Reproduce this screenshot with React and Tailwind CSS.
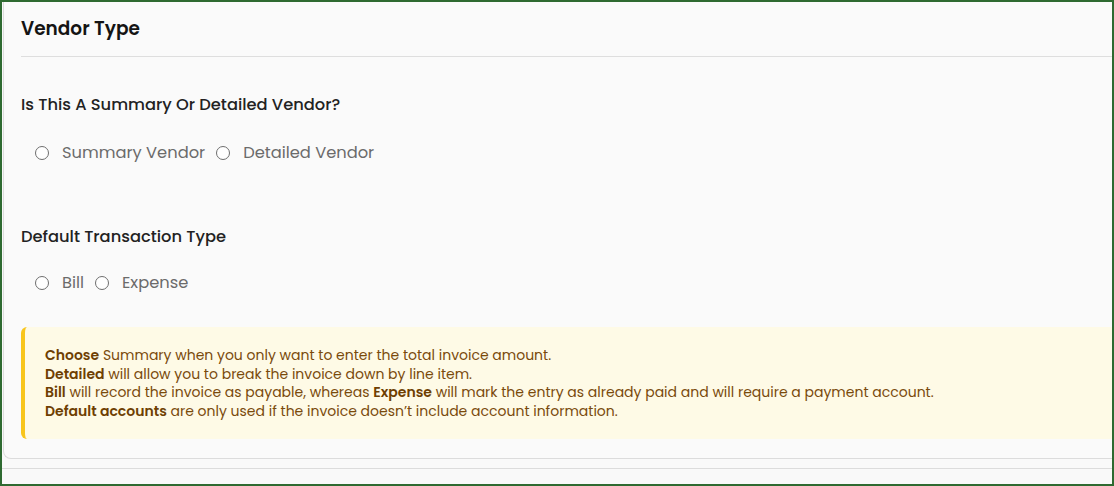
import { useState } from "react";

const font = { fontFamily: "Poppins, Inter, 'Noto Sans', sans-serif" };

function Radio({ label, checked, onClick }) {
  return (
    <label onClick={onClick} className="flex items-center cursor-pointer">
      <span className="flex h-[14px] w-[14px] items-center justify-center rounded-full border-[1.5px] border-[#6e6e6e] bg-white">
        {checked && <span className="h-[6px] w-[6px] rounded-full bg-[#555]" />}
      </span>
      <span className="ml-[13px] mr-[11px] text-[16.3px] leading-[22px] text-[#6b6b6b]">{label}</span>
    </label>
  );
}

export default function App() {
  const [vendorKind, setVendorKind] = useState("");
  const [txType, setTxType] = useState("");

  return (
    <div
      style={font}
      className="h-[486px] w-[1114px] overflow-hidden border-2 border-[#2e6a31] bg-[#f9f9f9]"
    >
      {/* card */}
      <div className="ml-px w-[1140px] rounded-bl-lg border-b border-l border-[#dcdcdc] bg-[#fafafa] px-[17px] pb-[19px]">
        <div className="flex h-[55px] items-center border-b border-[#dedede]">
          <h2 className="text-[18.5px] font-semibold text-[#141414]">Vendor Type</h2>
        </div>

        <p className="mt-[37px] text-[16.3px] font-medium leading-[22px] text-[#222]">
          Is This A Summary Or Detailed Vendor?
        </p>
        <div className="ml-[14px] mt-[26px] flex">
          <Radio label="Summary Vendor" checked={vendorKind === "summary"} onClick={() => setVendorKind("summary")} />
          <Radio label="Detailed Vendor" checked={vendorKind === "detailed"} onClick={() => setVendorKind("detailed")} />
        </div>

        <p className="mt-[62px] text-[16.3px] font-medium leading-[22px] text-[#222]">
          Default Transaction Type
        </p>
        <div className="ml-[14px] mt-[24px] flex">
          <Radio label="Bill" checked={txType === "bill"} onClick={() => setTxType("bill")} />
          <Radio label="Expense" checked={txType === "expense"} onClick={() => setTxType("expense")} />
        </div>

        <div className="mt-[33px] w-[1110px] rounded-l-md border-l-4 border-[#f8c51c] bg-[#fefae6] pb-[19px] pl-[20px] pt-[19px] text-[14px] leading-[18.5px] text-[#7a4a0c]">
          <p>
            <b className="font-semibold text-[#6e3f02]">Choose</b> Summary when you only want to enter the total invoice amount.
          </p>
          <p>
            <b className="font-semibold text-[#6e3f02]">Detailed</b> will allow you to break the invoice down by line item.
          </p>
          <p>
            <b className="font-semibold text-[#6e3f02]">Bill</b> will record the invoice as payable, whereas{" "}
            <b className="font-semibold text-[#6e3f02]">Expense</b> will mark the entry as already paid and will require a payment account.
          </p>
          <p>
            <b className="font-semibold text-[#6e3f02]">Default accounts</b> are only used if the invoice doesn’t include account information.
          </p>
        </div>
      </div>

      <div className="mt-[9px] border-t border-[#dcdcdc]" />
    </div>
  );
}
